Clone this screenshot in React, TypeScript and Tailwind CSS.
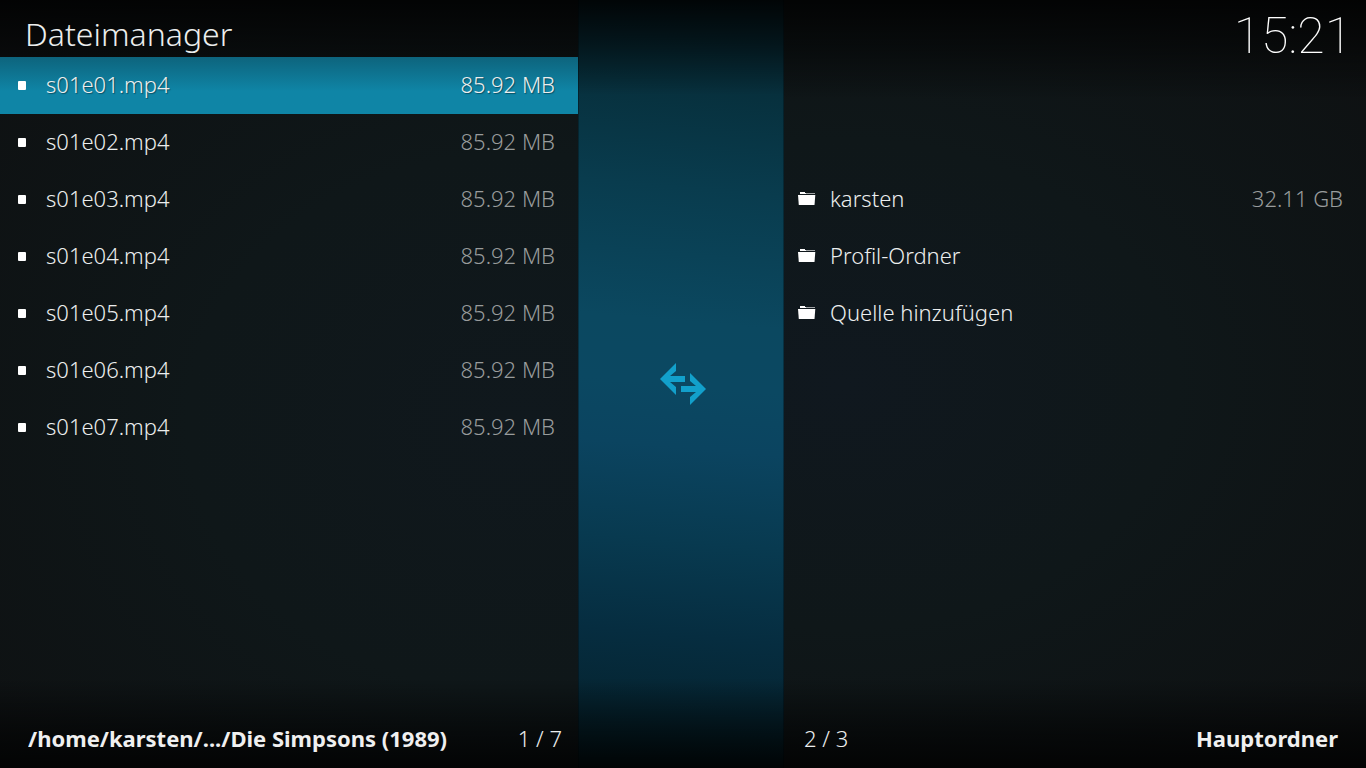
import { useState } from "react";

type Entry = { name: string; size?: string };

const files: Entry[] = [
  { name: "s01e01.mp4", size: "85.92 MB" },
  { name: "s01e02.mp4", size: "85.92 MB" },
  { name: "s01e03.mp4", size: "85.92 MB" },
  { name: "s01e04.mp4", size: "85.92 MB" },
  { name: "s01e05.mp4", size: "85.92 MB" },
  { name: "s01e06.mp4", size: "85.92 MB" },
  { name: "s01e07.mp4", size: "85.92 MB" },
];

const sources: Entry[] = [
  { name: "karsten", size: "32.11 GB" },
  { name: "Profil-Ordner" },
  { name: "Quelle hinzufügen" },
];

function FileIcon() {
  return (
    <svg className="mx-3.5 h-[14px] w-[18px] shrink-0" viewBox="0 0 18 14" fill="#fff">
      <rect x="4" y="4" width="8" height="9" rx="1" />
    </svg>
  );
}

function FolderIcon() {
  return (
    <svg className="mx-3.5 h-[14px] w-[18px] shrink-0" viewBox="0 0 18 14" fill="#fff">
      <path d="M2 1h5v1H2z" />
      <path d="M2 2h15v1H2z" fillOpacity=".6" />
      <path d="M2 2h6v1H2z" />
      <path d="M0 4h17.300l-.8 10H.8z" />
    </svg>
  );
}

function SwapIcon() {
  return (
    <svg className="h-[42px] w-[46px]" viewBox="0 0 46 42" fill="#12a0cb">
      <path d="M0 16 16 0v8l-6 5h15v6H10l6 5v8z" />
      <path d="M46 26 30 10v8l6 5H21v6h15l-6 5v8z" />
    </svg>
  );
}

export default function App() {
  const [selected, setSelected] = useState(0);

  return (
    <main className="grid min-h-screen grid-cols-[578fr_206fr_582fr] bg-[#0e1518] font-['Noto_Sans',sans-serif] text-[22px] leading-[30px] font-light text-[#eceeee]">
      <section className="flex min-w-0 flex-col bg-[linear-gradient(to_bottom,#000000d0_0px,#00000070_50px,transparent_100px),linear-gradient(to_top,#000000d0_0px,#00000080_40px,transparent_90px),radial-gradient(ellipse_at_90%_55%,#10181d,#0f1719_45%,#0e1011)]">
        <header className="flex h-[57px] items-center pt-2.5 pl-[25px]">
          <h1 className="text-[32px] leading-[44px]">Dateimanager</h1>
        </header>
        <ul className="flex-1">
          {files.map((f, i) => (
            <li key={f.name}>
              <button
                onClick={() => setSelected(i)}
                className={`flex h-[57px] w-full items-center pr-[23px] pb-[3px] text-left ${i === selected ? "bg-linear-to-b from-[#0d647d] to-[#0f85a6] to-60% [text-shadow:1px_1px_1px_#0006]" : ""}`}
              >
                <FileIcon />
                <span className="flex-1 truncate">{f.name}</span>
                <span className={i === selected ? "" : "text-[#999c9c]"}>{f.size}</span>
              </button>
            </li>
          ))}
        </ul>
        <footer className="flex h-[57px] items-center justify-between pr-4 pb-1 pl-7">
          <span className="truncate font-bold text-[#f0f0f0]">/home/karsten/.../Die Simpsons (1989)</span>
          <span className="shrink-0">1 / 7</span>
        </footer>
      </section>

      <div className="flex items-center justify-center border-x border-black/30 bg-[linear-gradient(to_bottom,#000000e0_0px,#00000080_45px,transparent_95px),linear-gradient(to_top,#000000e0_0px,#00000080_40px,transparent_90px),linear-gradient(185deg,#072833,#07303d_12%,#093c4e_25%,#0b4860_42%,#0b4862_50%,#0b4460_58%,#083a50_70%,#062d40_82%,#052532_92%,#042028)] bg-origin-border pl-1">
        <SwapIcon />
      </div>

      <section className="flex min-w-0 flex-col bg-[linear-gradient(to_bottom,#000000d0_0px,#00000070_50px,transparent_100px),linear-gradient(to_top,#000000d0_0px,#00000080_40px,transparent_90px),radial-gradient(ellipse_at_10%_50%,#10181f,#0f1719_45%,#0e1011)]">
        <header className="flex h-[57px] items-center justify-end pt-3.5 pr-3.5">
          <time className="font-['Roboto',sans-serif] text-[50px] leading-[58px] font-thin text-white">15:21</time>
        </header>
        <ul className="flex-1 pt-[114px]">
          {sources.map((s) => (
            <li key={s.name}>
              <button className="flex h-[57px] w-full items-center pr-[23px] pb-[3px] text-left">
                <FolderIcon />
                <span className="flex-1 truncate">{s.name}</span>
                <span className="text-[#999c9c]">{s.size}</span>
              </button>
            </li>
          ))}
        </ul>
        <footer className="flex h-[57px] items-center justify-between pr-7 pb-1 pl-5">
          <span>2 / 3</span>
          <span className="font-bold text-[#f0f0f0]">Hauptordner</span>
        </footer>
      </section>
    </main>
  );
}
